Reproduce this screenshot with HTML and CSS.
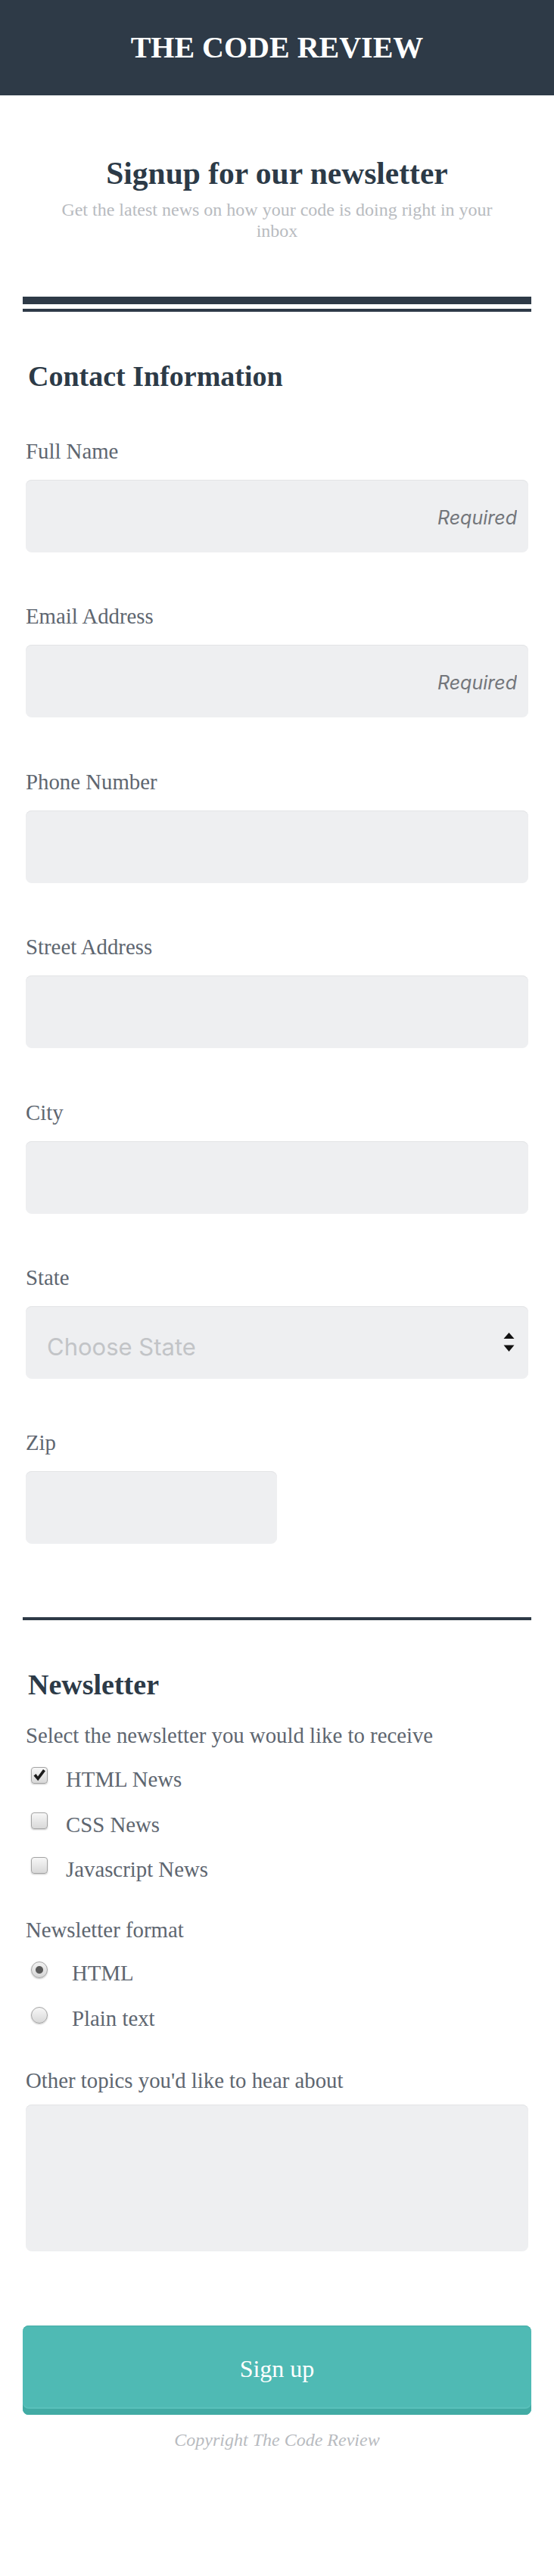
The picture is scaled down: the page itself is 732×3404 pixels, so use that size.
FILE: index.html
```html
<!DOCTYPE html>
<html lang="en">
<head>
<meta charset="utf-8">
<title>The Code Review - Newsletter Signup</title>
<link rel="stylesheet" href="styles.css">
</head>
<body>
<header class="site-header">
  <h1 class="site-title">THE CODE REVIEW</h1>
</header>
<main class="page">
  <section class="intro">
    <h2 class="intro-title">Signup for our newsletter</h2>
    <p class="intro-text">Get the latest news on how your code is doing right in your inbox</p>
  </section>
  <div class="rule-double"></div>
  <form class="signup-form">
    <section class="form-section">
      <h3 class="section-title">Contact Information</h3>
      <div class="field">
        <label class="field-label" for="name">Full Name</label>
        <input class="text-input" id="name" type="text" placeholder="Required">
      </div>
      <div class="field">
        <label class="field-label" for="email">Email Address</label>
        <input class="text-input" id="email" type="email" placeholder="Required">
      </div>
      <div class="field">
        <label class="field-label" for="phone">Phone Number</label>
        <input class="text-input" id="phone" type="tel">
      </div>
      <div class="field">
        <label class="field-label" for="street">Street Address</label>
        <input class="text-input" id="street" type="text">
      </div>
      <div class="field">
        <label class="field-label" for="city">City</label>
        <input class="text-input" id="city" type="text">
      </div>
      <div class="field">
        <label class="field-label" for="state">State</label>
        <div class="select-wrap">
          <select class="select-input" id="state">
            <option>Choose State</option>
          </select>
          <svg class="select-arrows" width="15" height="25" viewBox="0 0 15 25" aria-hidden="true">
            <polygon points="0.5,8 7.5,0 14.5,8" fill="#111"/>
            <polygon points="0.5,16.5 14.5,16.5 7.5,25" fill="#111"/>
          </svg>
        </div>
      </div>
      <div class="field">
        <label class="field-label" for="zip">Zip</label>
        <input class="text-input zip-input" id="zip" type="text">
      </div>
    </section>

    <hr class="rule">

    <section class="form-section">
      <h3 class="section-title">Newsletter</h3>
      <p class="form-note">Select the newsletter you would like to receive</p>
      <div class="choice-list">
        <label class="choice">
          <span class="box">
            <input class="checkbox" type="checkbox" checked>
            <svg class="check" width="22" height="22" viewBox="0 0 22 22" aria-hidden="true">
              <polygon points="3.5,11.5 6.5,9 9,12.5 16,3 19,5.3 9.2,18.2" fill="#1c1c1c"/>
            </svg>
          </span>
          <span class="choice-text">HTML News</span>
        </label>
        <label class="choice">
          <span class="box"><input class="checkbox" type="checkbox"></span>
          <span class="choice-text">CSS News</span>
        </label>
        <label class="choice">
          <span class="box"><input class="checkbox" type="checkbox"></span>
          <span class="choice-text">Javascript News</span>
        </label>
      </div>

      <p class="form-note note-format">Newsletter format</p>
      <div class="choice-list radio-list">
        <label class="choice">
          <input class="radio" type="radio" name="format" checked>
          <span class="choice-text">HTML</span>
        </label>
        <label class="choice">
          <input class="radio" type="radio" name="format">
          <span class="choice-text">Plain text</span>
        </label>
      </div>

      <label class="field-label topics-label" for="topics">Other topics you'd like to hear about</label>
      <textarea class="text-input textarea" id="topics"></textarea>
    </section>

    <button class="submit" type="submit">Sign up</button>
  </form>
  <footer class="site-footer">
    <p class="copyright">Copyright The Code Review</p>
  </footer>
</main>
</body>
</html>
```

FILE: styles.css
```css
* {
  box-sizing: border-box;
}

body {
  margin: 0;
  background: #ffffff;
  color: #5e6670;
  font-family: "Liberation Serif", "Times New Roman", serif;
}

/* Header */
.site-header {
  background: #2e3a47;
  padding: 40px 0;
  text-align: center;
}

.site-title {
  margin: 0;
  font-size: 40px;
  line-height: 46px;
  font-weight: 700;
  color: #ffffff;
}

/* Page */
.page {
  padding: 0 30px 165px;
}

.intro {
  padding-top: 79px;
  text-align: center;
}

.intro-title {
  margin: 0;
  font-size: 41.5px;
  line-height: 48px;
  font-weight: 700;
  color: #2c3a47;
}

.intro-text {
  max-width: 600px;
  margin: 10px auto 0;
  font-size: 24px;
  line-height: 28px;
  color: #b8bbc0;
}

.rule-double {
  margin-top: 73px;
  height: 20px;
  border-top: 10px solid #2e3a47;
  border-bottom: 4px solid #2e3a47;
}

/* Form */
.form-section {
  padding: 0 4px;
}

.section-title {
  margin: 63px 0 0;
  padding-left: 3px;
  font-size: 38px;
  line-height: 44px;
  font-weight: 700;
  color: #2c3a47;
}

.field {
  margin-top: 67.4px;
}

.section-title + .field {
  margin-top: 60px;
}

.field-label {
  display: block;
  font-size: 28.8px;
  line-height: 34px;
}

.text-input {
  display: block;
  width: 100%;
  height: 96px;
  margin: 21px 0 0;
  padding: 4px 15px 0;
  border: 0;
  border-radius: 8px;
  background: #eeeff1;
  box-shadow: inset 0 1px 0 #e3e4e6;
  font-family: Inter, "Liberation Sans", sans-serif;
  font-size: 25px;
  font-style: italic;
  text-align: right;
  color: #333333;
  outline: none;
}

.text-input::placeholder {
  color: #73767b;
}

.zip-input {
  width: 332px;
}

.select-wrap {
  position: relative;
  margin-top: 21px;
}

.select-input {
  -webkit-appearance: none;
  appearance: none;
  display: block;
  width: 100%;
  height: 96px;
  margin: 0;
  padding: 12px 28px 0;
  border: 0;
  border-radius: 8px;
  background: #eeeff1;
  box-shadow: inset 0 1px 0 #e3e4e6;
  font-family: Inter, "Liberation Sans", sans-serif;
  font-size: 31px;
  color: #c2c4c7;
  outline: none;
}

.select-arrows {
  position: absolute;
  right: 18px;
  top: 35px;
  pointer-events: none;
}

.rule {
  margin: 97px 0 0;
  height: 4px;
  border: 0;
  background: #2e3a47;
}

.form-note {
  margin: 28px 0 0;
  font-size: 28.8px;
  line-height: 34px;
}

.note-format {
  margin-top: 46px;
}

.choice-list {
  display: flex;
  flex-direction: column;
  gap: 25.5px;
  margin-top: 24px;
}

.radio-list {
  gap: 26px;
  margin-top: 23px;
}

.choice {
  display: flex;
  align-items: flex-start;
  padding-left: 7px;
  font-size: 28.8px;
  line-height: 34px;
}

.box {
  position: relative;
  display: block;
  width: 22px;
  height: 22px;
  margin: 1px 24px 0 0;
}

.checkbox {
  -webkit-appearance: none;
  appearance: none;
  display: block;
  width: 22px;
  height: 22px;
  margin: 0;
  border: 1px solid #a4a4a4;
  border-radius: 4px;
  background: linear-gradient(#f7f7f7, #d8d8d8);
  box-shadow: 0 1px 2px rgba(0, 0, 0, 0.22);
}

.check {
  position: absolute;
  left: 0;
  top: 0;
  pointer-events: none;
}

.radio {
  -webkit-appearance: none;
  appearance: none;
  flex: none;
  width: 22px;
  height: 22px;
  margin: 2px 32px 0 0;
  border: 1px solid #a4a4a4;
  border-radius: 50%;
  background: linear-gradient(#f7f7f7, #d8d8d8);
  box-shadow: 0 1px 2px rgba(0, 0, 0, 0.22);
}

.radio:checked {
  background: radial-gradient(circle at center, #5a5a5a 0, #5a5a5a 4.5px, rgba(90, 90, 90, 0) 5.5px),
              linear-gradient(#f2f2f2, #d6d6d6);
}

.topics-label {
  margin-top: 48px;
}

.textarea {
  height: 194px;
  margin-top: 15px;
  resize: none;
}

.submit {
  display: block;
  width: 100%;
  margin: 98px 0 0;
  padding: 37px 0 41px;
  border: 0;
  border-radius: 8px;
  background: #4fbab4;
  box-shadow: inset 0 -8px 0 #42aba4, inset 0 -10px 0 #5ac1bb, inset 0 1px 0 #45aea7;
  font-family: "Liberation Serif", "Times New Roman", serif;
  font-size: 32px;
  line-height: 40px;
  color: #ffffff;
  cursor: pointer;
}

.site-footer {
  margin-top: 19px;
  text-align: center;
}

.copyright {
  margin: 0;
  font-size: 24px;
  line-height: 28px;
  font-style: italic;
  color: #b8bbc0;
}
```
